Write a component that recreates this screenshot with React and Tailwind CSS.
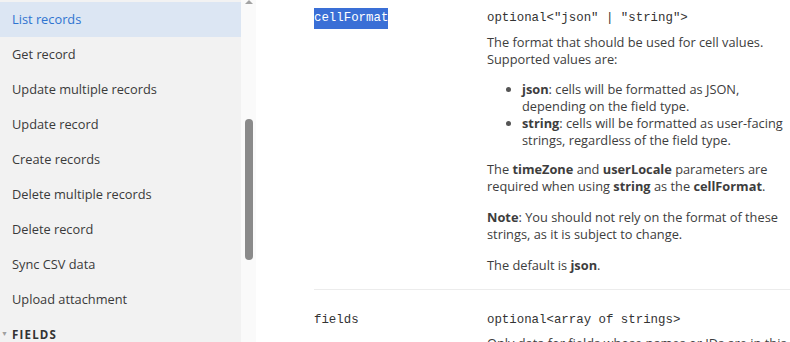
import React from 'react';

const navItems = [
    'List records',
    'Get record',
    'Update multiple records',
    'Update record',
    'Create records',
    'Delete multiple records',
    'Delete record',
    'Sync CSV data',
    'Upload attachment',
];

const sans = "font-['Segoe_UI','Open_Sans','Noto_Sans',sans-serif]";
const mono = "font-['Courier_New','Liberation_Mono',monospace]";

const Sidebar = () => (
    <div className="w-[241px] shrink-0 bg-[#f2f2f2] pt-[2px]">
        {navItems.map((label, i) => (
            <div
                key={label}
                className={
                    i === 0
                        ? 'h-[35px] flex items-center pl-3 bg-[#dce6f3] text-[#2f74d0] text-[12.8px]'
                        : 'h-[35px] flex items-center pl-3 text-[#3a3a3a] text-[12.8px]'
                }
            >
                {label}
            </div>
        ))}
        <div className="h-[35px] flex items-center">
            <span className="w-3 text-[7px] text-[#a0a0a0] pl-[1px]">▼</span>
            <span className="text-[11.5px] font-bold tracking-[1.2px] text-[#333]">FIELDS</span>
        </div>
    </div>
);

const Scrollbar = () => (
    <div className="w-[15px] shrink-0 bg-[#fafafa] flex flex-col items-center">
        <div className="w-0 h-0 border-l-[4px] border-r-[4px] border-b-[4px] border-l-transparent border-r-transparent border-b-[#a3a3a3]" />
        <div className="mt-[115px] w-[8px] h-[141px] rounded-full bg-[#8a8a8a]" />
    </div>
);

const ParamRow = ({ name, type, highlight, children }) => (
    <div className="grid grid-cols-[173px_1fr]">
        <div>
            <span
                className={
                    highlight
                        ? `${mono} text-[12.4px] bg-[#3a6fd6] text-white inline-block leading-[21px] h-[21px]`
                        : `${mono} text-[12.4px] text-[#333] inline-block leading-[21px] h-[21px]`
                }
            >
                {name}
            </span>
        </div>
        <div>
            <div className={`${mono} text-[12.4px] text-[#333] leading-[21px] h-[21px]`}>{type}</div>
            {children}
        </div>
    </div>
);

const Main = () => (
    <div className={`flex-1 pl-[58px] ${sans} text-[12.8px] leading-[17px] text-[#3d3d3d]`}>
        <div className="pt-[8px] pb-[15px] border-b border-[#ececec]">
            <ParamRow name="cellFormat" type={'optional<"json" | "string">'} highlight>
                <p className="mt-[5px] whitespace-nowrap">
                    The format that should be used for cell values.
                    <br />
                    Supported values are:
                </p>
                <ul className="mt-[13px] pl-[35px] list-disc marker:text-[#555] whitespace-nowrap">
                    <li>
                        <b className="font-bold">json</b>: cells will be formatted as JSON,
                        <br />
                        depending on the field type.
                    </li>
                    <li>
                        <b className="font-bold">string</b>: cells will be formatted as user-facing
                        <br />
                        strings, regardless of the field type.
                    </li>
                </ul>
                <p className="mt-[12px] whitespace-nowrap">
                    The <b className="font-bold">timeZone</b> and <b className="font-bold">userLocale</b> parameters are
                    <br />
                    required when using <b className="font-bold">string</b> as the{' '}
                    <b className="font-bold">cellFormat</b>.
                </p>
                <p className="mt-[14px] whitespace-nowrap">
                    <b className="font-bold">Note</b>: You should not rely on the format of these
                    <br />
                    strings, as it is subject to change.
                </p>
                <p className="mt-[14px] whitespace-nowrap">
                    The default is <b className="font-bold">json</b>.
                </p>
            </ParamRow>
        </div>
        <div className="pt-[20px]">
            <ParamRow name="fields" type="optional<array of strings>">
                <p className="mt-[4px] whitespace-nowrap">
                    Only data for fields whose names or IDs are in this
                </p>
            </ParamRow>
        </div>
    </div>
);

export default function App() {
    return (
        <div className={`flex w-[790px] h-[342px] overflow-hidden bg-white ${sans}`}>
            <Sidebar />
            <Scrollbar />
            <Main />
        </div>
    );
}
